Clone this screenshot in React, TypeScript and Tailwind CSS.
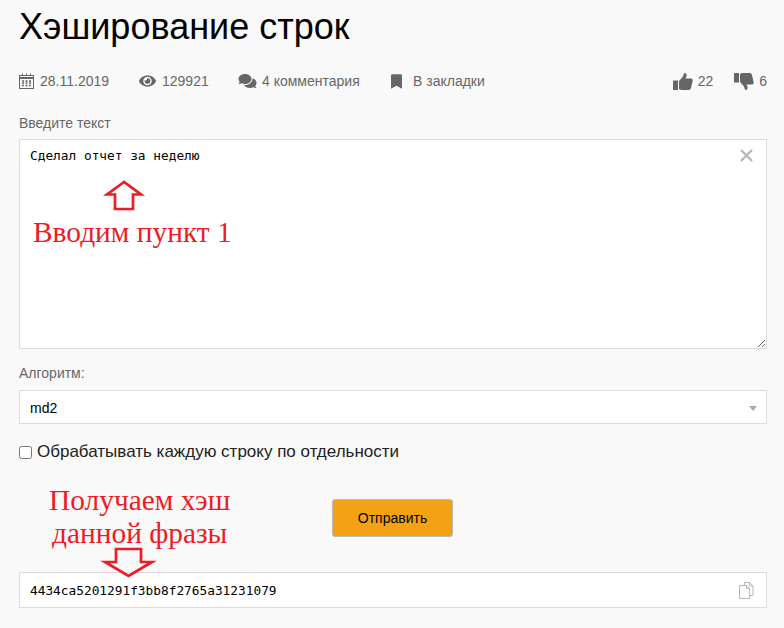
import React from "react";
import { FaEye, FaComments, FaBookmark } from "react-icons/fa";

const CalendarIcon = () => (
  <svg className="h-[16px] w-[16px]" viewBox="0 0 16 16" fill="none" stroke="#666">
    <rect x="0.500" y="2.500" width="14" height="13" />
    <path d="M0.500 5H14.500" strokeWidth="2" />
    <path d="M3.500 0.500V3M7.500 0.500V3M11.500 0.500V3" />
    <path d="M3 8h2M6.500 8h2M10 8h2M3 10h2M6.500 10h2M10 10h2M3 12.500h2M6.500 12.500h2M10 12.500h2" strokeWidth="1.400" />
  </svg>
);

const ThumbUp = () => (
  <svg className="h-[17px] w-[20px]" viewBox="0 0 20 17" fill="#666">
    <rect x="0" y="7.500" width="5" height="9.500" />
    <path d="M6 8L10 3.500C10.500 2 10.500 1 11.500 0C13.500 0 14 2 13.500 3.500L12.500 5.500H18C19.500 5.500 20 7 19.500 8.500L18 15C17.500 16.500 16.500 17 15.500 17H9C8 17 7 16.500 6 16Z" />
  </svg>
);

const ThumbDown = () => (
  <svg className="h-[17px] w-[20px]" viewBox="0 0 20 17" fill="#666">
    <rect x="0" y="0" width="5" height="9.500" />
    <path d="M6 9L10 13.500C10.500 15 10.500 16 11.500 17C13.500 17 14 15 13.500 13.500L12.500 11.500H18C19.500 11.500 20 10 19.500 8.500L18 2C17.500 0.500 16.500 0 15.500 0H9C8 0 7 0.500 6 1Z" />
  </svg>
);

const CopyIcon = () => (
  <svg className="h-[17px] w-[15px]" viewBox="0 0 15 17" fill="none" stroke="#b3b6bb">
    <path d="M5.500 3V0.500H10.500L14 4V13.500H11" />
    <path d="M0.500 3.500H7.500L10.500 6.500V16.500H0.500Z" fill="white" />
    <path d="M7.500 3.500V6.500H10.500M10.500 0.500V4H14" />
  </svg>
);

const MetaItem = ({ icon, text, className }: { icon: React.ReactNode; text: string; className: string }) => (
  <div className={`flex items-center ${className}`}>
    {icon}
    <span>{text}</span>
  </div>
);

const App = () => {
  return (
    <div className="relative h-[628px] w-[784px] overflow-hidden bg-[#f9f9f9] pl-[19px] pr-[17px] font-['Liberation_Sans',Arial,sans-serif] text-[#666]">
      <h1 className="h-[54px] pt-[6px] text-[36px] leading-[42px] text-black">Хэширование строк</h1>

      <div className="mt-[17px] flex h-[20px] items-center justify-between text-[14px]">
        <div className="flex items-center">
          <MetaItem className="w-[120px] gap-[5px]" icon={<CalendarIcon />} text="28.11.2019" />
          <MetaItem className="w-[99px] gap-[6px]" icon={<FaEye className="h-[16px] w-[17px]" />} text="129921" />
          <MetaItem className="w-[153px] gap-[5px]" icon={<FaComments className="h-[16px] w-[19px]" />} text="4 комментария" />
          <MetaItem className="gap-[11px]" icon={<FaBookmark className="h-[15px] w-[11px]" />} text="В закладки" />
        </div>
        <div className="flex items-center">
          <MetaItem className="mr-[21px] gap-[5px]" icon={<ThumbUp />} text="22" />
          <MetaItem className="gap-[5px]" icon={<ThumbDown />} text="6" />
        </div>
      </div>

      <label className="mt-[24px] block h-[16px] text-[14px] leading-[16px]">Введите текст</label>
      <div className="relative mt-[8px] h-[210px]">
        <textarea
          defaultValue="Сделал отчет за неделю"
          className="block h-[210px] w-full border border-[#dcdcdc] bg-white px-[10px] py-[8px] font-['DejaVu_Sans_Mono',monospace] text-[12.8px] leading-[16px] text-black outline-none"
        />
        <svg className="absolute right-[14px] top-[10px] h-[13px] w-[13px]" viewBox="0 0 13 13">
          <path d="M1 1l11 11M12 1L1 12" stroke="#b5b5b5" strokeWidth="2.200" fill="none" />
        </svg>
      </div>

      <label className="mt-[16px] block h-[16px] text-[14px] leading-[16px]">Алгоритм:</label>
      <div className="mt-[9px] flex h-[34px] items-center justify-between border border-[#dcdcdc] bg-white px-[9px] text-[14px] text-black">
        <span className="pl-[1px] pt-[2px]">md2</span>
        <span className="mt-[2px] h-0 w-0 border-x-[4px] border-t-[5px] border-x-transparent border-t-[#aaa]" />
      </div>

      <label className="mt-[18px] flex h-[20px] items-center gap-[5px] text-[17px] text-[#222]">
        <input type="checkbox" className="m-0 h-[13px] w-[13px]" />
        Обрабатывать каждую строку по отдельности
      </label>

      <div className="mt-[37px] flex pl-[313px]">
        <button className="h-[38px] w-[121px] rounded-[3px] border border-[#b9b9b9] bg-[#f4a213] text-[14px] text-black">Отправить</button>
      </div>

      <div className="mt-[35px] flex h-[36px] items-center justify-between border border-[#dcdcdc] bg-white pl-[10px] pr-[12px] font-['DejaVu_Sans_Mono',monospace] text-[12.8px] text-black">
        <span className="pt-[1px]">4434ca5201291f3bb8f2765a31231079</span>
        <CopyIcon />
      </div>

      {/* red annotations drawn on top of the form */}
      <svg className="absolute left-[100px] top-[178px] h-[36px] w-[48px]" viewBox="0 0 48 36">
        <path d="M24 4L7 16.500H15V31H33V16.500H41Z" fill="none" stroke="#ed1c24" strokeWidth="2.700" />
      </svg>
      <div className="absolute left-[33px] top-[214px] font-['Liberation_Serif',serif] text-[29.400px] leading-[36px] text-[#ed1c24]">Вводим пункт 1</div>
      <div className="absolute left-[49px] top-[484px] font-['Liberation_Serif',serif] text-[29.400px] leading-[33px] text-[#ed1c24]">
        Получаем хэш
        <div className="pl-[3px]">данной фразы</div>
      </div>
      <svg className="absolute left-[100px] top-[545px] h-[36px] w-[58px]" viewBox="0 0 58 36">
        <path d="M16 4H41V17H52L28.500 31L5 17H16Z" fill="none" stroke="#ed1c24" strokeWidth="2.700" />
      </svg>
    </div>
  );
};

export default App;
